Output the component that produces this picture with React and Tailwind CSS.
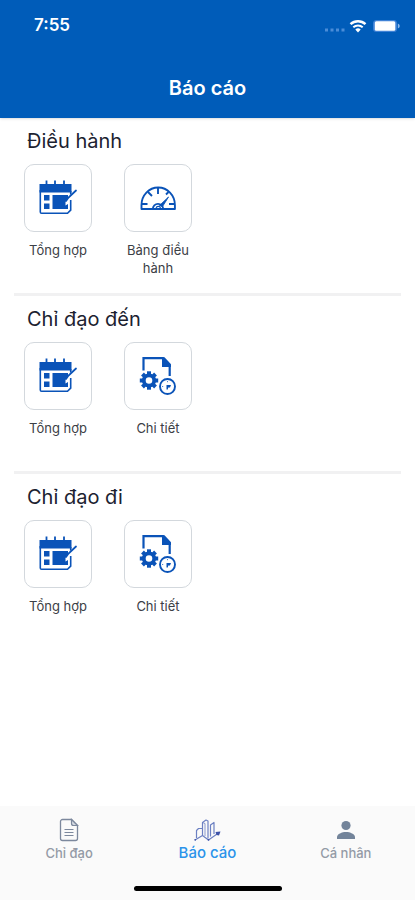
const CalendarIcon = () => (
  <svg width="40" height="40" viewBox="0 0 40 40" fill="none" aria-hidden="true">
    <path d="M1.500 6h32v8.500h-32z" fill="#0a53b8" />
    <path d="M8.500 2.500v5M17 2.500v5M26 2.500v5" stroke="#0a53b8" strokeWidth="1.800" />
    <path d="M2.300 12v22q0 1.300 1.200 1.300h26l3.200-3.200V22" stroke="#0a53b8" strokeWidth="1.600" />
    <path d="M32.700 13v3.500" stroke="#0a53b8" strokeWidth="1.600" />
    <path d="M6 17h5.500v5.500H6zM6 25.500h5.500V31H6zM14.500 17h15.500v3l-2.500 3.500v4l2.500-1.500v5H14.500z" fill="#0a53b8" />
    <path d="M38 12.500L30.500 19.500 28 23" stroke="#0a53b8" strokeWidth="1.800" strokeLinecap="round" />
  </svg>
);

const GaugeIcon = () => (
  <svg width="40" height="40" viewBox="0 0 40 40" fill="none" stroke="#0a53b8" aria-hidden="true">
    <path d="M3.500 31v-4a16.700 17.500 0 0 1 33.400 0v4z" strokeWidth="1.900" strokeLinejoin="round" />
    <path d="M20 9.500v6.500M10 14l4 4M30.500 14l-2.500 2.500M4 26h5.500M36.500 26H31" strokeWidth="1.900" />
    <path d="M14.800 31a5.200 5.200 0 0 1 10.400 0" strokeWidth="1.800" />
    <path d="M18 30.500a2.300 2.300 0 0 1 4.500-.5" strokeWidth="1.200" />
    <path d="M21.500 27.500l9-8.500-6 9.500z" fill="#0a53b8" strokeWidth="0.900" />
  </svg>
);

const teeth = [0, 45, 90, 135, 180, 225, 270, 315];

const DetailIcon = () => (
  <svg width="40" height="40" viewBox="0 0 40 40" fill="none" aria-hidden="true">
    <path d="M5.500 14.500V2.200H25l6.700 6.800V20" stroke="#0a53b8" strokeWidth="2.200" />
    <path d="M24 1.200h2.500l6.500 7V11h-9z" fill="#0a53b8" />
    <circle cx="11" cy="24.500" r="5.200" stroke="#0a53b8" strokeWidth="3.800" />
    {teeth.map((angle) => (
      <path key={angle} d="M9 15.300h4v4H9z" fill="#0a53b8" transform={`rotate(${angle} 11 24.500)`} />
    ))}
    <circle cx="29.500" cy="30.500" r="7.500" stroke="#0a53b8" strokeWidth="1.900" />
    <path d="M28.500 29h4.500l-1 2.500h-1.800l-.4 2h-1.300z" fill="#0a53b8" />
    <path d="M29.500 25v1.200M24 30.500h1.200" stroke="#0a53b8" strokeWidth="0.700" />
  </svg>
);

const FileIcon = () => (
  <svg width="24" height="24" viewBox="0 0 24 24" fill="none" stroke="#7c889d" aria-hidden="true">
    <path d="M14.500 1.500H5.500a2 2 0 0 0-2 2v17a2 2 0 0 0 2 2h13a2 2 0 0 0 2-2v-13z" strokeWidth="1.300" />
    <path d="M14.500 1.500v4a2 2 0 0 0 2 2h4z" strokeWidth="1.200" fill="#d5dae2" />
    <path d="M7.500 11.500h9M7.500 14.500h9M7.500 17.500h9" strokeWidth="1.200" />
  </svg>
);

const ChartIcon = () => (
  <svg width="28" height="24" viewBox="0 0 28 24" fill="none" stroke="#6c80c2" aria-hidden="true">
    <path d="M3.500 20v-7.500l2-2h3.500" strokeWidth="1.200" strokeLinejoin="round" />
    <path d="M9.500 17V4.500L13 2l2 1v17.500M17.500 18.500V7l3.500-2.500V16" strokeWidth="1.200" strokeLinejoin="round" />
    <path d="M9.500 4.500l2.500 1V18" strokeWidth="0.800" />
    <path d="M2 22l7.500-4.500L15.500 22l10-7" strokeWidth="1.200" />
    <circle cx="2.200" cy="21.800" r="0.900" fill="#3d52a8" stroke="none" />
    <circle cx="15.500" cy="21.800" r="0.900" fill="#3d52a8" stroke="none" />
    <path d="M22.500 14l5-.5-1.500 4-2.500-.5z" fill="#3d52a8" stroke="none" />
  </svg>
);

const PersonIcon = () => (
  <svg width="24" height="24" viewBox="0 0 24 24" fill="#73849a" aria-hidden="true">
    <circle cx="12" cy="7.500" r="4.600" />
    <path d="M3 21v-2c0-3 5-5 9-5s9 2 9 5v2z" />
  </svg>
);

const sections = [
  {
    title: "Điều hành",
    items: [
      { label: "Tổng hợp", icon: CalendarIcon },
      { label: "Bảng điều hành", icon: GaugeIcon },
    ],
  },
  {
    title: "Chỉ đạo đến",
    items: [
      { label: "Tổng hợp", icon: CalendarIcon },
      { label: "Chi tiết", icon: DetailIcon },
    ],
  },
  {
    title: "Chỉ đạo đi",
    items: [
      { label: "Tổng hợp", icon: CalendarIcon },
      { label: "Chi tiết", icon: DetailIcon },
    ],
  },
];

const tabs = [
  { label: "Chỉ đạo", icon: FileIcon },
  { label: "Báo cáo", icon: ChartIcon, active: true },
  { label: "Cá nhân", icon: PersonIcon },
];

const StatusBar = () => (
  <div className="flex h-13 items-center justify-between pl-[34px] pr-3.5 text-white">
    <span className="text-[17px] font-semibold">7:55</span>
    <div className="flex items-center gap-1">
      <svg width="20" height="12" viewBox="0 0 20 12" fill="#4a8cd8" aria-hidden="true">
        <path d="M0 8.500h3v3H0zM5.500 8.500h3v3h-3zM11 8.500h3v3h-3zM16.500 8.500h3v3h-3z" />
      </svg>
      <svg width="18" height="14" viewBox="0 0 18 14" fill="none" stroke="#fff" aria-hidden="true">
        <path d="M1.500 5.200a11 11 0 0 1 15 0" strokeWidth="2.400" />
        <path d="M4.300 8.200a7 7 0 0 1 9.400 0" strokeWidth="2" />
        <path d="M9 13.500l-2.700-3a4 4 0 0 1 5.400 0z" fill="#fff" stroke="none" />
      </svg>
      <svg width="30" height="14" viewBox="0 0 30 14" aria-hidden="true">
        <rect x="2" y="1" width="24" height="12" rx="3.500" fill="#3f82d6" />
        <rect x="3.800" y="2.200" width="20.500" height="9.600" rx="1.500" fill="#fff" />
        <path d="M26.800 4.500q2 .8 2 2.500t-2 2.500z" fill="#8db8ea" />
      </svg>
    </div>
  </div>
);

const Section = ({ title, items }) => (
  <section className="px-2 pt-[11px]">
    <h2 className="ml-[19px] text-xl leading-6 text-[#1c2230]">{title}</h2>
    <div className="mt-[11px] flex">
      {items.map(({ label, icon: Icon }) => (
        <button key={label} className="flex w-[100px] flex-col items-center">
          <span className="flex size-[68px] items-center justify-center rounded-[10px] border border-[#d3d8dd] bg-white">
            <Icon />
          </span>
          <span className="mt-[9px] min-h-9 px-4 text-[13px] leading-[18px] text-[#3c4046]">{label}</span>
        </button>
      ))}
    </div>
  </section>
);

const App = () => {
  return (
    <div className="flex min-h-screen flex-col bg-white font-['Inter',sans-serif]">
      <header className="h-[118px] bg-[#005cb9] shadow-sm">
        <StatusBar />
        <h1 className="mt-[22px] text-center text-xl leading-7 font-semibold text-white">Báo cáo</h1>
      </header>

      <main className="flex-1">
        {sections.map((section, i) => (
          <div key={section.title}>
            {i > 0 && <hr className="mx-3.5 mt-4 h-[3px] border-0 bg-[#f1f1f2]" />}
            <Section {...section} />
          </div>
        ))}
      </main>

      <footer className="bg-[#fafafa]">
        <nav className="flex pt-3">
          {tabs.map(({ label, icon: Icon, active }) => (
            <a
              key={label}
              href="#"
              className={`flex flex-1 flex-col items-center leading-[22px] font-medium ${
                active ? "text-[15px] text-[#2b93ea]" : "text-[13px] text-[#949ba6]"
              }`}
            >
              <Icon />
              {label}
            </a>
          ))}
        </nav>
        <div className="mx-auto mt-[22px] mb-[9px] h-[5px] w-[148px] rounded-full bg-black" />
      </footer>
    </div>
  );
};

export default App;
